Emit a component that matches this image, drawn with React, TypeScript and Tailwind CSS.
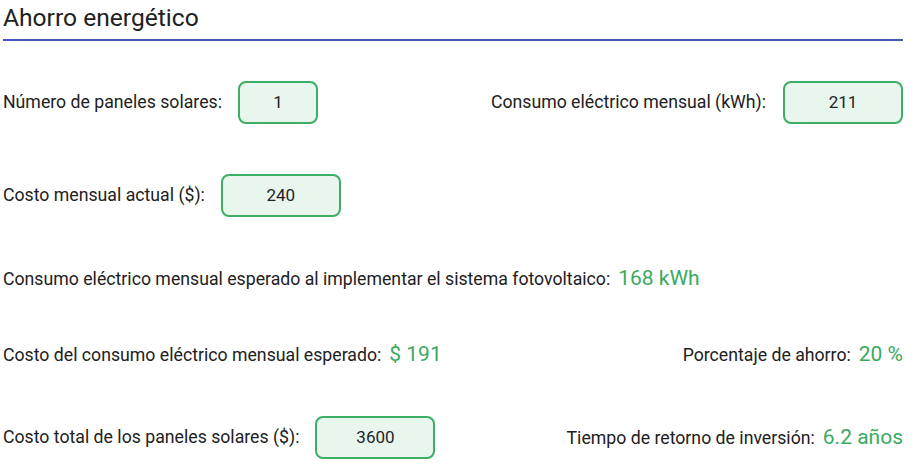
import React from 'react';

function Box({ value, width }: { value: string; width: string }) {
  return (
    <div
      className={`${width} h-[43px] rounded-[8px] border-2 border-[#3daf64] bg-[#e9f6ee] flex items-center justify-center text-[17px] text-[#212529]`}
    >
      {value}
    </div>
  );
}

function Value({ children }: { children: React.ReactNode }) {
  return <span className="text-[21px] text-[#3aaa5f] ml-[8px]">{children}</span>;
}

export default function App() {
  return (
    <div className="w-[912px] h-[465px] bg-white font-['Roboto',sans-serif] text-[17.7px] text-[#212121] px-[3px] overflow-hidden">
      {/* Header */}
      <div className="w-[900px] border-b-2 border-[#4759bd] h-[41px] pt-[2px]">
        <h1 className="text-[24.6px] leading-[32px]">Ahorro energético</h1>
      </div>

      {/* Row 1 */}
      <div className="w-[900px] h-[43px] flex items-center justify-between mt-[40px]">
        <div className="flex items-center gap-[16px]">
          <span>Número de paneles solares:</span>
          <Box value="1" width="w-[80px]" />
        </div>
        <div className="flex items-center gap-[17px]">
          <span>Consumo eléctrico mensual (kWh):</span>
          <Box value="211" width="w-[120px]" />
        </div>
      </div>

      {/* Row 2 */}
      <div className="h-[43px] flex items-center gap-[16px] mt-[50px]">
        <span>Costo mensual actual ($):</span>
        <Box value="240" width="w-[120px]" />
      </div>

      {/* Row 3 */}
      <div className="h-[43px] flex items-center mt-[40px]">
        <div className="flex items-baseline">
          <span>Consumo eléctrico mensual esperado al implementar el sistema fotovoltaico:</span>
          <Value>168 kWh</Value>
        </div>
      </div>

      {/* Row 4 */}
      <div className="w-[900px] h-[43px] flex items-center justify-between mt-[33px]">
        <div className="flex items-baseline">
          <span>Costo del consumo eléctrico mensual esperado:</span>
          <Value>$ 191</Value>
        </div>
        <div className="flex items-baseline">
          <span>Porcentaje de ahorro:</span>
          <Value>20 %</Value>
        </div>
      </div>

      {/* Row 5 */}
      <div className="w-[900px] h-[43px] flex items-center justify-between mt-[40px]">
        <div className="flex items-center gap-[16px]">
          <span>Costo total de los paneles solares ($):</span>
          <Box value="3600" width="w-[120px]" />
        </div>
        <div className="flex items-baseline">
          <span>Tiempo de retorno de inversión:</span>
          <Value>6.2 años</Value>
        </div>
      </div>
    </div>
  );
}
